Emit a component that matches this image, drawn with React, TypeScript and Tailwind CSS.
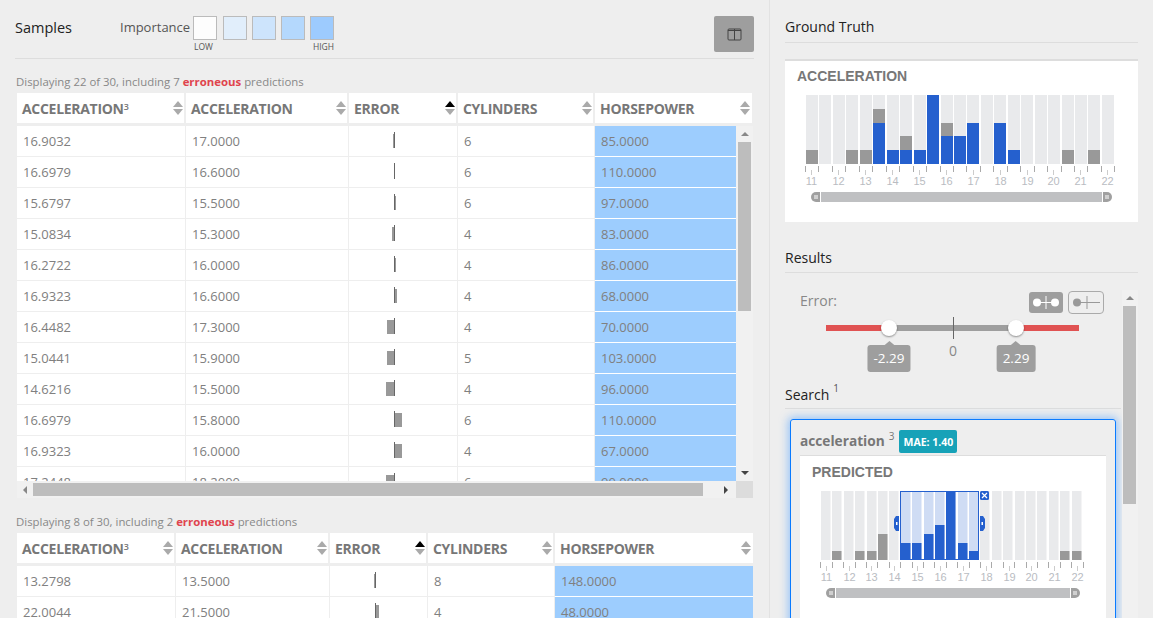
import React from "react";

const sans = "font-['Open_Sans',sans-serif]";

function Sort({ active = false }: { active?: boolean }) {
  return (
    <svg width="10" height="14" viewBox="0 0 10 14" className="shrink-0">
      <polygon points="5,0 10,6 0,6" fill={active ? "#000" : "#aaa"} />
      <polygon points="0,8 10,8 5,14" fill="#aaa" />
    </svg>
  );
}

function Arrow({ dir }: { dir: "up" | "down" | "left" | "right" }) {
  const p = { up: "4,2 8,6 0,6", down: "0,2 8,2 4,6", left: "6,0 6,8 2,4", right: "2,0 2,8 6,4" }[dir];
  return (
    <svg width="8" height="8" viewBox="0 0 8 8">
      <polygon points={p} fill={dir === "up" || dir === "left" ? "#888" : "#444"} />
    </svg>
  );
}

function ErrorBar({ v, center }: { v: number; center: number }) {
  return (
    <div className="relative h-[30px]">
      <div className="absolute top-[6px] h-4 w-px bg-[#666]" style={{ left: center }} />
      {v !== 0 && (
        <div
          className="absolute top-2 h-[14px] bg-[#999]"
          style={v < 0 ? { left: center + v, width: -v } : { left: center + 1, width: v }}
        />
      )}
    </div>
  );
}

type Row = [string, string, number, string, string];

const rows1: Row[] = [
  ["16.9032", "17.0000", -1, "6", "85.0000"],
  ["16.6979", "16.6000", 0, "6", "110.0000"],
  ["15.6797", "15.5000", 1, "6", "97.0000"],
  ["15.0834", "15.3000", -2, "4", "83.0000"],
  ["16.2722", "16.0000", 1, "4", "86.0000"],
  ["16.9323", "16.6000", 2, "4", "68.0000"],
  ["16.4482", "17.3000", -7, "4", "70.0000"],
  ["15.0441", "15.9000", -7, "5", "103.0000"],
  ["14.6216", "15.5000", -8, "4", "96.0000"],
  ["16.6979", "15.8000", 7, "6", "110.0000"],
  ["16.9323", "16.0000", 7, "4", "67.0000"],
  ["17.2448", "18.2000", -8, "6", "90.0000"],
];

const rows2: Row[] = [
  ["13.2798", "13.5000", -1, "8", "148.0000"],
  ["22.0044", "21.5000", 3, "4", "48.0000"],
];

function Table({
  head,
  body,
  rows,
  center,
  scroll,
}: {
  head: string;
  body: string;
  rows: Row[];
  center: number;
  scroll?: boolean;
}) {
  const cell = "h-[31px] bg-white border-b border-[#eee] pl-[6px] leading-[30px] text-[13px] text-[#808080]";
  return (
    <div className="pl-[2px]">
      <div className={`grid ${head} gap-x-[2px] h-[30px]`}>
        {["ACCELERATION", "ACCELERATION", "ERROR", "CYLINDERS", "HORSEPOWER"].map((h, i) => (
          <div
            key={i}
            className={`bg-white flex items-center justify-between pl-[5px] ${i === 4 ? "pr-[2px]" : "pr-[1px]"}`}
          >
            <span className="mt-[2px] font-bold text-[14px] text-[#777] tracking-[-0.3px] leading-none">
              {h}
              {i === 0 && <sup className="text-[9px] font-semibold">3</sup>}
            </span>
            <Sort active={i === 2} />
          </div>
        ))}
      </div>
      <div className="mt-[3px] flex">
        <div className={`grid ${body} gap-x-px content-start ${scroll ? "h-[355px] overflow-hidden" : "w-full"}`}>
          {rows.map((r, i) => (
            <React.Fragment key={i}>
              <div className={cell}>{r[0]}</div>
              <div className={cell}>{r[1]}</div>
              <div className="h-[31px] bg-white border-b border-[#eee]">
                <ErrorBar v={r[2]} center={center} />
              </div>
              <div className={cell}>{r[3]}</div>
              <div className={`${cell} !bg-[#9dcdfe] border-white text-[#5f6d80]`}>{r[4]}</div>
            </React.Fragment>
          ))}
        </div>
        {scroll && (
          <div className="w-[17px] h-[355px] bg-[#f1f1f1] flex flex-col items-center">
            <div className="h-4 flex items-center justify-center">
              <Arrow dir="up" />
            </div>
            <div className="w-[13px] h-[169px] bg-[#bdbdbd]" />
            <div className="mt-auto h-4 flex items-center justify-center">
              <Arrow dir="down" />
            </div>
          </div>
        )}
      </div>
    </div>
  );
}

type Bar = [number, number];

function Hist({
  x0,
  y0,
  w,
  h,
  bars,
  bx,
  pitch,
  bw,
  top,
  tx,
  tp,
  lx,
  lp,
  tickY,
  labelY,
  sx,
  sx2,
  sy,
  selection,
}: {
  x0: number;
  y0: number;
  w: number;
  h: number;
  bars: Bar[];
  bx: number;
  pitch: number;
  bw: number;
  top: number;
  tx: number;
  tp: number;
  lx: number;
  lp: number;
  tickY: number;
  labelY: number;
  sx: number;
  sx2: number;
  sy: number;
  selection?: boolean;
}) {
  const H = 69;
  const bottom = top + H;
  return (
    <svg width={w} height={h} viewBox={`${x0} ${y0} ${w} ${h}`} className="block">
      {bars.map((b, i) => {
        const x = Math.round(bx + pitch * i);
        const inSel = selection && i >= 7 && i <= 13;
        return (
          <g key={i}>
            <rect x={x} y={top} width={bw} height={H} fill={inSel ? "#cfdcf4" : "#e9eaec"} />
            {b[0] > 0 && <rect x={x} y={bottom - b[0]} width={bw} height={b[0]} fill="#999" />}
            {b[1] > 0 && <rect x={x} y={bottom - b[1]} width={bw} height={b[1]} fill="#2560ce" />}
          </g>
        );
      })}
      {Array.from({ length: 24 }).map((_, i) => {
        const x = Math.round(tx + tp * i) + 0.5;
        return <line key={i} x1={x} x2={x} y1={tickY} y2={tickY + 6} stroke="#aaa" />;
      })}
      {Array.from({ length: 12 }).map((_, i) => {
        const x = Math.round(lx + lp * i) + 0.5;
        return (
          <g key={i}>
            <line x1={x} x2={x} y1={tickY + 4} y2={tickY + 9} stroke="#ccc" />
            <text
              x={x}
              y={labelY}
              textAnchor="middle"
              fontSize="11"
              fill="#b9bcc2"
              fontFamily="'Liberation Sans', sans-serif"
            >
              {11 + i}
            </text>
          </g>
        );
      })}
      <rect x={sx + 10} y={sy} width={sx2 - sx - 20} height={10} fill="#bfc0c2" />
      <path d={`M${sx + 9} ${sy}h-4a5 5 0 0 0 0 10h4z`} fill="#a0a0a0" />
      <path d={`M${sx2 - 9} ${sy}h4a5 5 0 0 1 0 10h-4z`} fill="#a0a0a0" />
      <path d={`M${sx + 4} ${sy + 3}v4M${sx + 6} ${sy + 3}v4M${sx2 - 6} ${sy + 3}v4M${sx2 - 4} ${sy + 3}v4`} stroke="#fff" />
      {selection && (
        <g>
          <rect x={900.5} y={491.5} width={78} height={68} fill="none" stroke="#2560ce" />
          <polygon points="899,516 899,531 896,531 894,528 894,519 896,516" fill="#2560ce" />
          <polygon points="980,516 980,531 983,531 985,528 985,519 983,516" fill="#2560ce" />
          <rect x={896} y={522} width={1.5} height={3} fill="#fff" />
          <rect x={981.5} y={522} width={1.5} height={3} fill="#fff" />
          <rect x={980} y={491} width={9} height={9} rx={1.5} fill="#2560ce" />
          <path d="M982 493l5 5M987 493l-5 5" stroke="#fff" strokeWidth={1.2} />
        </g>
      )}
    </svg>
  );
}

const top: Bar[] = [
  [14, 0], [0, 0], [0, 0], [14, 0], [14, 0], [55, 41], [0, 14], [28, 14], [0, 14], [0, 69], [41, 28], [0, 28],
  [0, 41], [0, 0], [0, 41], [0, 14], [0, 0], [0, 0], [0, 0], [14, 0], [0, 0], [14, 0], [0, 0],
];
const bottom: Bar[] = [
  [0, 0], [9, 0], [0, 0], [9, 0], [9, 0], [26, 0], [0, 0], [0, 17], [0, 17], [0, 26], [0, 35], [0, 69], [0, 17],
  [0, 9], [0, 0], [0, 0], [0, 0], [0, 0], [0, 0], [0, 0], [0, 0], [9, 0], [9, 0],
];

function Tip({ v }: { v: string }) {
  return (
    <div className="absolute top-[16px] -translate-x-1/2 left-0 flex flex-col items-center">
      <div className="w-0 h-0 border-x-[6px] border-x-transparent border-b-[5px] border-b-[#9e9e9e]" />
      <div className="bg-[#9e9e9e] rounded-[3px] text-white text-[13.5px] h-[27px] leading-[27px] px-[6px] -mt-px whitespace-nowrap">
        {v}
      </div>
    </div>
  );
}

function Handle({ v }: { v: string }) {
  return (
    <div className="relative z-10 w-0 h-[6px]">
      <div className="absolute -left-2 -top-[5px] w-4 h-4 rounded-full bg-white shadow-[0_1px_2px_rgba(0,0,0,0.4)]" />
      <Tip v={v} />
    </div>
  );
}

export default function App() {
  return (
    <div className={`${sans} w-[1153px] h-[618px] overflow-hidden bg-[#eee] flex text-[#333]`}>
      <div className="w-[770px] shrink-0 border-r border-[#e2e2e2] pl-[15px] pr-[15px]">
        <div className="h-[59px] border-b border-[#ddd] pt-4 flex">
          <div className="w-[105px] text-[14.5px] leading-6 text-[#222]">Samples</div>
          <div className="text-[13px] leading-[22px] w-[73px] text-[#555] whitespace-nowrap">Importance</div>
          <div className="flex flex-col">
            <div className="flex gap-[5px]">
              <div className="w-6 h-6 mr-px border border-[#bbb] bg-[#fdfdfd]" />
              <div className="w-6 h-6 border border-[#bbb] bg-[#e1eefb]" />
              <div className="w-6 h-6 border border-[#bbb] bg-[#cde4fc]" />
              <div className="w-6 h-6 border border-[#bbb] bg-[#b4d8fd]" />
              <div className="w-6 h-6 border border-[#bbb] bg-[#9dcbfe]" />
            </div>
            <div className="flex justify-between text-[8.5px] leading-[14px] text-[#555] pl-[1px]">
              <span>LOW</span>
              <span>HIGH</span>
            </div>
          </div>
          <div className="ml-auto w-10 h-9 bg-[#9e9e9e] rounded-[2px] flex items-center justify-center">
            <svg width="15" height="13" viewBox="0 0 15 13" fill="none" stroke="#444" strokeWidth="1">
              <rect x="1" y="1" width="13" height="11" rx="1" />
              <path d="M7.5 1v11M1 2.5h13" />
            </svg>
          </div>
        </div>
        <div className="h-[34px] pt-[15px] pl-px text-[11.4px] leading-4 text-[#888] whitespace-nowrap">
          Displaying 22 of 30, including 7 <b className="text-[#e0444d]">erroneous</b> predictions
        </div>
        <Table
          head="grid-cols-[167px_161px_107px_135px_157px]"
          body="grid-cols-[168px_162px_108px_136px_141px]"
          rows={rows1}
          center={45}
          scroll
        />
        <div className="ml-[2px] h-[17px] w-[736px] bg-[#f1f1f1] flex items-center">
          <div className="w-4 flex justify-center">
            <Arrow dir="left" />
          </div>
          <div className="w-[670px] h-[13px] bg-[#bdbdbd]" />
          <div className="w-[33px] flex justify-end pr-[6px]">
            <Arrow dir="right" />
          </div>
          <div className="w-[17px] h-[17px] bg-[#dcdcdc]" />
        </div>
        <div className="h-[35px] pt-4 pl-px text-[11.4px] leading-4 text-[#888] whitespace-nowrap">
          Displaying 8 of 30, including 2 <b className="text-[#e0444d]">erroneous</b> predictions
        </div>
        <Table
          head="grid-cols-[157px_152px_96px_125px_198px]"
          body="grid-cols-[158px_153px_97px_126px_198px]"
          rows={rows2}
          center={45}
        />
      </div>

      <div className="flex-1 min-w-0 pl-[15px] pr-[15px]">
        <div className="h-[43px] border-b border-[#ddd] pt-[17px] text-[14px] leading-5 text-[#222]">Ground Truth</div>
        <div className="mt-4 h-[163px] bg-white border-t-2 border-[#ddd]">
          <div className="pl-3 pt-[7px] h-[27px] font-['Liberation_Sans',sans-serif] font-bold text-[14px] leading-4 text-[#777]">
            ACCELERATION
          </div>
          <Hist
            x0={785}
            y0={88}
            w={353}
            h={125}
            bars={top}
            bx={806}
            pitch={13.45}
            bw={12}
            top={95}
            tx={805}
            tp={13.45}
            lx={811.3}
            lp={26.9}
            tickY={166}
            labelY={185}
            sx={811}
            sx2={1112}
            sy={192}
          />
        </div>
        <div className="mt-[25px] h-[26px] pt-px border-b border-[#ddd] text-[14px] leading-5 text-[#222]">Results</div>
        <div className="flex mt-[17px]">
          <div className="w-[336px]">
            <div className="h-[97px]">
              <div className="flex pl-[15px] pr-[17px] h-6 items-center">
                <span className="text-[14px] text-[#888] -mt-[3px]">Error:</span>
                <div className="ml-auto flex gap-[5px] items-center">
                  <div className="w-[34px] h-[21px] rounded-[3px] bg-[#9e9e9e] flex items-center justify-center">
                    <svg width="28" height="15" viewBox="0 0 28 15">
                      <path d="M5 7.5h18M14 1v13" stroke="#fff" strokeWidth="1" />
                      <circle cx="5" cy="7.5" r="4" fill="#fff" />
                      <circle cx="23" cy="7.5" r="4" fill="#fff" />
                    </svg>
                  </div>
                  <div className="w-9 h-[23px] rounded-[4px] border border-[#aaa] flex items-center justify-center">
                    <svg width="28" height="15" viewBox="0 0 28 15">
                      <path d="M5 7.5h23M15 1v13" stroke="#999" strokeWidth="1" />
                      <circle cx="5" cy="7.5" r="4" fill="#999" />
                    </svg>
                  </div>
                </div>
              </div>
              <div className="relative ml-[41px] mt-[11px] w-[253px] h-[6px] flex">
                <div className="w-[63px] bg-[#e05252]" />
                <Handle v="-2.29" />
                <div className="w-[127px] bg-[#9e9e9e] relative">
                  <div className="absolute left-[64px] -top-2 h-[22px] w-px bg-[#666]" />
                  <div className="absolute left-[60px] top-[16px] text-[14px] leading-5 text-[#888]">0</div>
                </div>
                <Handle v="2.29" />
                <div className="w-[63px] bg-[#e05252]" />
              </div>
            </div>
            <div className="h-[15px] flex items-center text-[14px] leading-5 text-[#222]">
              <span>Search</span>
              <sup className="ml-1 text-[10px] -mt-[3px] text-[#555]">1</sup>
            </div>
            <div className="h-px bg-[#ddd] mt-[6px]" />
            <div className="ml-[5px] mt-[10px] w-[326px] h-[240px] border border-[#0a7bff] rounded-[3px] shadow-[0_0_8px_2px_rgba(80,160,255,0.55)] px-[9px]">
              <div className="h-[36px] border-b border-[#ddd] flex items-center">
                <span className="mt-[7px] font-bold text-[13.7px] text-[#777]">acceleration</span>
                <sup className="ml-[4px] mt-[6px] text-[10px] text-[#777]">3</sup>
                <span className="ml-[5px] mt-[7px] h-[23px] w-[58px] bg-[#17a2b8] rounded-[2px] text-white font-bold text-[10.5px] leading-[24px] text-center whitespace-nowrap">
                  MAE: 1.40
                </span>
              </div>
              <div className="bg-white h-[200px]">
                <div className="pl-3 pt-2 h-[34px] font-['Liberation_Sans',sans-serif] font-bold text-[14px] leading-4 text-[#777]">
                  PREDICTED
                </div>
                <Hist
                  x0={800}
                  y0={490}
                  w={306}
                  h={120}
                  bars={bottom}
                  bx={821}
                  pitch={11.39}
                  bw={9.5}
                  top={491}
                  tx={820.3}
                  tp={11.4}
                  lx={825.7}
                  lp={22.85}
                  tickY={562}
                  labelY={581}
                  sx={826}
                  sx2={1080}
                  sy={588}
                  selection
                />
              </div>
            </div>
          </div>
          <div className="w-4 ml-px h-[330px] bg-[#f1f1f1] flex flex-col items-start pl-px">
            <div className="w-[13px] h-4 flex items-center justify-center">
              <Arrow dir="up" />
            </div>
            <div className="w-[13px] h-[198px] bg-[#bdbdbd]" />
          </div>
        </div>
      </div>
    </div>
  );
}
